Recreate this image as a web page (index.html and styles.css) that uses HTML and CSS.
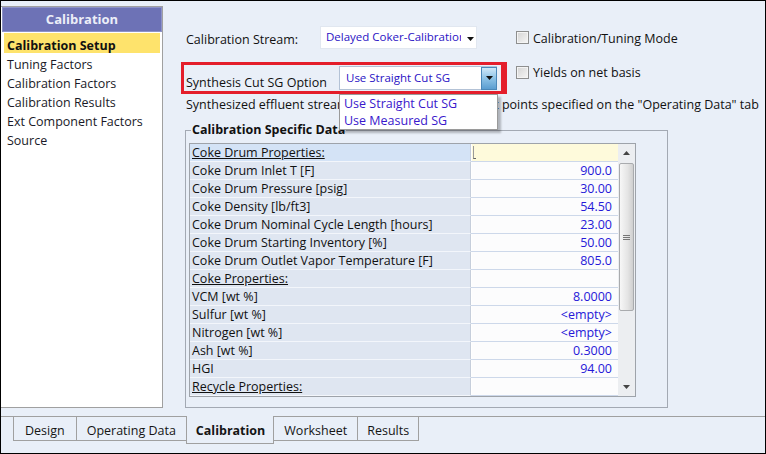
FILE: index.html
```html
<!DOCTYPE html>
<html lang="en">
<head>
<meta charset="utf-8">
<title>Calibration</title>
<link rel="stylesheet" href="styles.css">
</head>
<body>
<div class="frame">
  <div class="workspace">
    <aside class="side">
      <div class="side-head">Calibration</div>
      <ul class="nav">
        <li class="nav-item active">Calibration Setup</li>
        <li class="nav-item">Tuning Factors</li>
        <li class="nav-item">Calibration Factors</li>
        <li class="nav-item">Calibration Results</li>
        <li class="nav-item">Ext Component Factors</li>
        <li class="nav-item">Source</li>
      </ul>
    </aside>
    <main class="content">
      <div class="row row-stream">
        <div class="field-stream">
          <span class="lbl lbl-stream">Calibration Stream:</span>
          <div class="combo combo-stream">
            <span class="combo-text">Delayed Coker-Calibration</span>
            <svg class="tri" width="7" height="4" viewBox="0 0 7 4"><path d="M0 0h7L3.5 4z" fill="#111"/></svg>
          </div>
        </div>
        <div class="check"><span class="box"></span><span class="check-text">Calibration/Tuning Mode</span></div>
      </div>
      <div class="row row-sg">
        <div class="highlight">
          <span class="lbl lbl-sg">Synthesis Cut SG Option</span>
          <div class="combo combo-sg">
            <span class="combo-text">Use Straight Cut SG</span>
            <span class="dd-btn"><svg width="7" height="4" viewBox="0 0 7 4"><path d="M0 0h7L3.5 4z" fill="#111"/></svg></span>
            <ul class="dd-list">
              <li>Use Straight Cut SG</li>
              <li>Use Measured SG</li>
            </ul>
          </div>
        </div>
        <div class="check check-net"><span class="box"></span><span class="check-text">Yields on net basis</span></div>
      </div>
      <p class="note">Synthesized effluent stream uses the temperature set points specified on the "Operating Data" tab</p>
      <fieldset class="group">
        <legend>Calibration Specific Data</legend>
        <div class="grid">
          <div class="cells">
            <div class="c-lbl hdr sel">Coke Drum Properties:</div><div class="c-val edit"><span class="caret"></span></div>
            <div class="c-lbl">Coke Drum Inlet T [F]</div><div class="c-val">900.0</div>
            <div class="c-lbl">Coke Drum Pressure [psig]</div><div class="c-val">30.00</div>
            <div class="c-lbl">Coke Density [lb/ft3]</div><div class="c-val">54.50</div>
            <div class="c-lbl">Coke Drum Nominal Cycle Length [hours]</div><div class="c-val">23.00</div>
            <div class="c-lbl">Coke Drum Starting Inventory [%]</div><div class="c-val">50.00</div>
            <div class="c-lbl">Coke Drum Outlet Vapor Temperature [F]</div><div class="c-val">805.0</div>
            <div class="c-lbl hdr">Coke Properties:</div><div class="c-val"></div>
            <div class="c-lbl">VCM [wt %]</div><div class="c-val">8.0000</div>
            <div class="c-lbl">Sulfur [wt %]</div><div class="c-val">&lt;empty&gt;</div>
            <div class="c-lbl">Nitrogen [wt %]</div><div class="c-val">&lt;empty&gt;</div>
            <div class="c-lbl">Ash [wt %]</div><div class="c-val">0.3000</div>
            <div class="c-lbl">HGI</div><div class="c-val">94.00</div>
            <div class="c-lbl hdr">Recycle Properties:</div><div class="c-val"></div>
          </div>
          <div class="vscroll">
            <div class="sb-btn"><svg width="7" height="4" viewBox="0 0 7 4"><path d="M0 4h7L3.5 0z" fill="#444"/></svg></div>
            <div class="sb-track">
              <div class="sb-thumb"><span class="grip"></span></div>
            </div>
            <div class="sb-btn"><svg width="7" height="4" viewBox="0 0 7 4"><path d="M0 0h7L3.5 4z" fill="#444"/></svg></div>
          </div>
        </div>
      </fieldset>
    </main>
  </div>
  <nav class="tabs">
    <div class="tab tab-design">Design</div>
    <div class="tab">Operating Data</div>
    <div class="tab tab-active">Calibration</div>
    <div class="tab">Worksheet</div>
    <div class="tab tab-results">Results</div>
  </nav>
</div>
</body>
</html>
```

FILE: styles.css
```css
* { box-sizing: border-box; }
html, body { margin: 0; padding: 0; }
body {
  font-family: "Open Sans", "Noto Sans", sans-serif;
  font-size: 12.5px;
  color: #111;
  background: #e9eff8;
}
.frame {
  width: 766px;
  height: 454px;
  border: 1px solid #000;
  background: #e9eff8;
  display: flex;
  flex-direction: column;
  overflow: hidden;
}
.workspace {
  display: flex;
  height: 415px;
  flex: none;
}
/* side panel */
.side {
  width: 162px;
  height: 402px;
  margin-top: 5px;
  background: #fff;
  border: 1px solid #a0a0a0;
  border-left: 0;
  flex: none;
}
.side-head {
  height: 25px;
  margin-left: 1px;
  background: #6d72b6;
  border: 1px solid #8e93c8;
  color: #eceef8;
  font-weight: bold;
  font-size: 13px;
  text-align: center;
  line-height: 23px;
}
.nav {
  list-style: none;
  margin: 1px 0 0;
  padding: 0;
}
.nav-item {
  height: 19px;
  padding: 4px 0 0 6px;
  line-height: 16px;
  color: #1a1a28;
  white-space: nowrap;
}
.nav-item.active {
  height: 20px;
  margin: 0 2px 0 3px;
  padding: 5px 0 0 3px;
  background: #fee36c;
  font-weight: bold;
  color: #111;
}
/* content */
.content {
  flex: 1;
  padding: 25px 0 0 18px;
}
.row { display: flex; }
.row-stream { height: 23px; align-items: center; }
.field-stream { display: flex; align-items: center; width: 335px; height: 23px; }
.lbl { white-space: nowrap; }
.lbl-stream { width: 139px; padding: 4px 0 0 5px; }
.combo {
  position: relative;
  background: #fff;
  display: flex;
  align-items: center;
}
.combo-stream {
  width: 157px;
  height: 23px;
  border: 1px solid #e1e7f0;
  padding-left: 5px;
  color: #2a12c4;
  font-size: 11.5px;
}
.combo-stream .combo-text {
  width: 135px;
  overflow: hidden;
  white-space: nowrap;
  line-height: 19px;
  margin-top: -3px;
}
.combo-stream .tri { margin-left: 6px; margin-top: 2px; }
.check {
  display: flex;
  align-items: center;
  gap: 4px;
  white-space: nowrap;
}
.check-text { padding-top: 1px; }
.box {
  width: 13px;
  height: 13px;
  border: 1px solid #8e8f8f;
  background: linear-gradient(135deg, #d4d4d4, #f6f6f6);
  box-shadow: inset 0 0 0 1px #f4f4f4;
  flex: none;
}
.row-sg { margin-top: 13px; align-items: flex-start; }
.highlight {
  width: 326px;
  height: 32px;
  border: 3px solid #e41e2b;
  border-right-width: 6px;
  display: flex;
  align-items: center;
}
.lbl-sg { width: 155px; padding-left: 2px; padding-top: 8px; }
.combo-sg {
  width: 158px;
  height: 24px;
  border: 1px solid #b3c2d6;
  color: #2a12c4;
  font-size: 11.5px;
  padding-left: 6px;
}
.combo-sg .combo-text { flex: 1; margin-top: -2px; }
.dd-btn {
  width: 16px;
  height: 23px;
  margin-right: -1px;
  border: 1px solid #4a87b8;
  background: linear-gradient(#cfe8f8, #8cc2e6 50%, #5a9dd0);
  display: flex;
  align-items: center;
  justify-content: center;
}
.dd-list {
  position: absolute;
  left: -1px;
  top: 27px;
  width: 159px;
  margin: 0;
  padding: 0 0 0 4px;
  list-style: none;
  background: #fff;
  border: 1px solid #9a9a9a;
  box-shadow: 3px 3px 2px rgba(0,0,0,0.25);
  color: #3a18cc;
  font-size: 12.5px;
  z-index: 5;
}
.dd-list li { height: 17px; line-height: 18px; }
.check-net { margin-left: 9px; margin-top: 1px; }
.note {
  margin: 3px 0 0;
  padding-left: 5px;
  line-height: 16px;
  white-space: nowrap;
}
/* group */
.group {
  margin: 9px 0 0 4px;
  width: 483px;
  border: 1px solid #a3a9b3;
  padding: 5px 31px 10px 3px;
  min-width: 0;
}
.group legend {
  font-weight: bold;
  line-height: 16px;
  padding: 0 1px;
  margin-left: 2px;
}
.grid {
  display: flex;
  border: 1px solid #9ea3aa;
  background: #fff;
}
.cells {
  display: grid;
  grid-template-columns: 281px 147px;
  grid-auto-rows: 18px;
}
.c-lbl {
  background: #dfe6f1;
  border-bottom: 1px solid #f3f6fb;
  border-right: 1px solid #c6cedb;
  padding-left: 2px;
  line-height: 18px;
  white-space: nowrap;
}
.c-lbl.hdr { text-decoration: underline; }
.c-lbl.sel { background: #d4e3f6; }
.c-val {
  background: #fcfcfd;
  border-bottom: 1px solid #cdd8ea;
  box-shadow: inset 1px 0 0 #fff;
  text-align: right;
  padding-right: 6px;
  line-height: 18px;
  color: #2618d8;
}
.c-val.edit { background: #fefadb; text-align: left; padding-left: 2px; }
.caret {
  display: inline-block;
  width: 3px;
  height: 13px;
  margin-top: 2px;
  border-left: 1px solid #9a9a9a;
  border-bottom: 1px solid #666;
  vertical-align: top;
}
.vscroll {
  width: 17px;
  display: flex;
  flex-direction: column;
  background: #eceef1;
}
.sb-btn {
  height: 18px;
  display: flex;
  align-items: center;
  justify-content: center;
  flex: none;
}
.sb-track { flex: 1; padding: 1px 1px 0 1px; }
.sb-thumb {
  height: 148px;
  border: 1px solid #a9abae;
  border-radius: 2px;
  background: linear-gradient(90deg, #f7f7f7, #e4e4e4 60%, #cfcfcf);
  display: flex;
  align-items: center;
  justify-content: center;
}
.grip {
  width: 7px;
  height: 5px;
  border-top: 1px solid #777;
  border-bottom: 1px solid #777;
  position: relative;
}
.grip::after {
  content: "";
  position: absolute;
  left: 0;
  right: 0;
  top: 1px;
  border-top: 1px solid #777;
}
/* tabs */
.tabs {
  display: flex;
  border-top: 1px solid #a0a0a0;
  padding-left: 12px;
  flex: none;
  height: 36px;
}
.tab {
  height: 24px;
  padding: 5px 10px 0;
  line-height: 18px;
  border: 1px solid #a0a0a0;
  border-top: 0;
  margin-left: -1px;
  white-space: nowrap;
  color: #151515;
}
.tab:first-child { margin-left: 0; }
.tab-design { padding: 5px 11px 0; }
.tab-results { padding: 5px 9px 0; }
.tab-active {
  height: 28px;
  margin-top: -1px;
  padding: 6px 8px 0 9px;
  background: #e9eff8;
  font-weight: bold;
}
```
